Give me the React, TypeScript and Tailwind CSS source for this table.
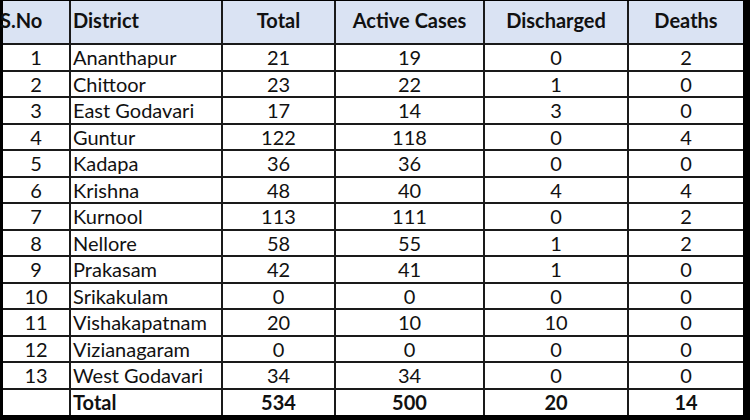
type Row = {
    no: string;
    district: string;
    total: string;
    active: string;
    discharged: string;
    deaths: string;
};

const rows: Row[] = [
    { no: '1', district: 'Ananthapur', total: '21', active: '19', discharged: '0', deaths: '2' },
    { no: '2', district: 'Chittoor', total: '23', active: '22', discharged: '1', deaths: '0' },
    { no: '3', district: 'East Godavari', total: '17', active: '14', discharged: '3', deaths: '0' },
    { no: '4', district: 'Guntur', total: '122', active: '118', discharged: '0', deaths: '4' },
    { no: '5', district: 'Kadapa', total: '36', active: '36', discharged: '0', deaths: '0' },
    { no: '6', district: 'Krishna', total: '48', active: '40', discharged: '4', deaths: '4' },
    { no: '7', district: 'Kurnool', total: '113', active: '111', discharged: '0', deaths: '2' },
    { no: '8', district: 'Nellore', total: '58', active: '55', discharged: '1', deaths: '2' },
    { no: '9', district: 'Prakasam', total: '42', active: '41', discharged: '1', deaths: '0' },
    { no: '10', district: 'Srikakulam', total: '0', active: '0', discharged: '0', deaths: '0' },
    { no: '11', district: 'Vishakapatnam', total: '20', active: '10', discharged: '10', deaths: '0' },
    { no: '12', district: 'Vizianagaram', total: '0', active: '0', discharged: '0', deaths: '0' },
    { no: '13', district: 'West Godavari', total: '34', active: '34', discharged: '0', deaths: '0' },
];

const cell = 'border-2 border-[#1a1a1a] h-[26.5px] p-0 leading-none';

export default function App() {
    return (
        <div
            className="w-[750px] h-[420px] overflow-hidden bg-black pt-px pl-[3px] pr-[7px] pb-[5px] text-[#111]"
            style={{ fontFamily: 'Lato, "Open Sans", sans-serif' }}
        >
            <table className="w-[740px] table-fixed border-collapse bg-white text-[20px]">
                <colgroup>
                    <col className="w-[67px]" />
                    <col className="w-[152px]" />
                    <col className="w-[113px]" />
                    <col className="w-[149px]" />
                    <col className="w-[144px]" />
                    <col className="w-[115px]" />
                </colgroup>
                <thead className="bg-[#dae3f3] font-bold">
                    <tr className="h-[43px]">
                        <th className="border-2 border-[#1a1a1a] border-l-0 border-t-0 p-0 pb-1 text-left">
                            <span className="-ml-[3px]">S.No</span>
                        </th>
                        <th className="border-2 border-[#1a1a1a] border-t-0 p-0 pb-1 pl-[2px] text-left">
                            District
                        </th>
                        <th className="border-2 border-[#1a1a1a] border-t-0 p-0 pb-1 text-center">
                            Total
                        </th>
                        <th className="border-2 border-[#1a1a1a] border-t-0 p-0 pb-1 text-center">
                            Active Cases
                        </th>
                        <th className="border-2 border-[#1a1a1a] border-t-0 p-0 pb-1 text-center">
                            Discharged
                        </th>
                        <th className="border-2 border-[#1a1a1a] border-t-0 border-r-0 p-0 pb-1 text-center">
                            Deaths
                        </th>
                    </tr>
                </thead>
                <tbody>
                    {rows.map((row) => (
                        <tr key={row.no}>
                            <td className={`${cell} border-l-0 text-center`}>{row.no}</td>
                            <td className={`${cell} pl-[2px] text-left`}>{row.district}</td>
                            <td className={`${cell} text-center`}>{row.total}</td>
                            <td className={`${cell} text-center`}>{row.active}</td>
                            <td className={`${cell} text-center`}>{row.discharged}</td>
                            <td className={`${cell} border-r-0 text-center`}>{row.deaths}</td>
                        </tr>
                    ))}
                    <tr className="font-bold">
                        <td className={`${cell} border-l-0 border-b-0`}></td>
                        <td className={`${cell} border-b-0 pl-[2px] text-left`}>Total</td>
                        <td className={`${cell} border-b-0 text-center`}>534</td>
                        <td className={`${cell} border-b-0 text-center`}>500</td>
                        <td className={`${cell} border-b-0 text-center`}>20</td>
                        <td className={`${cell} border-b-0 border-r-0 text-center`}>14</td>
                    </tr>
                </tbody>
            </table>
        </div>
    );
}
